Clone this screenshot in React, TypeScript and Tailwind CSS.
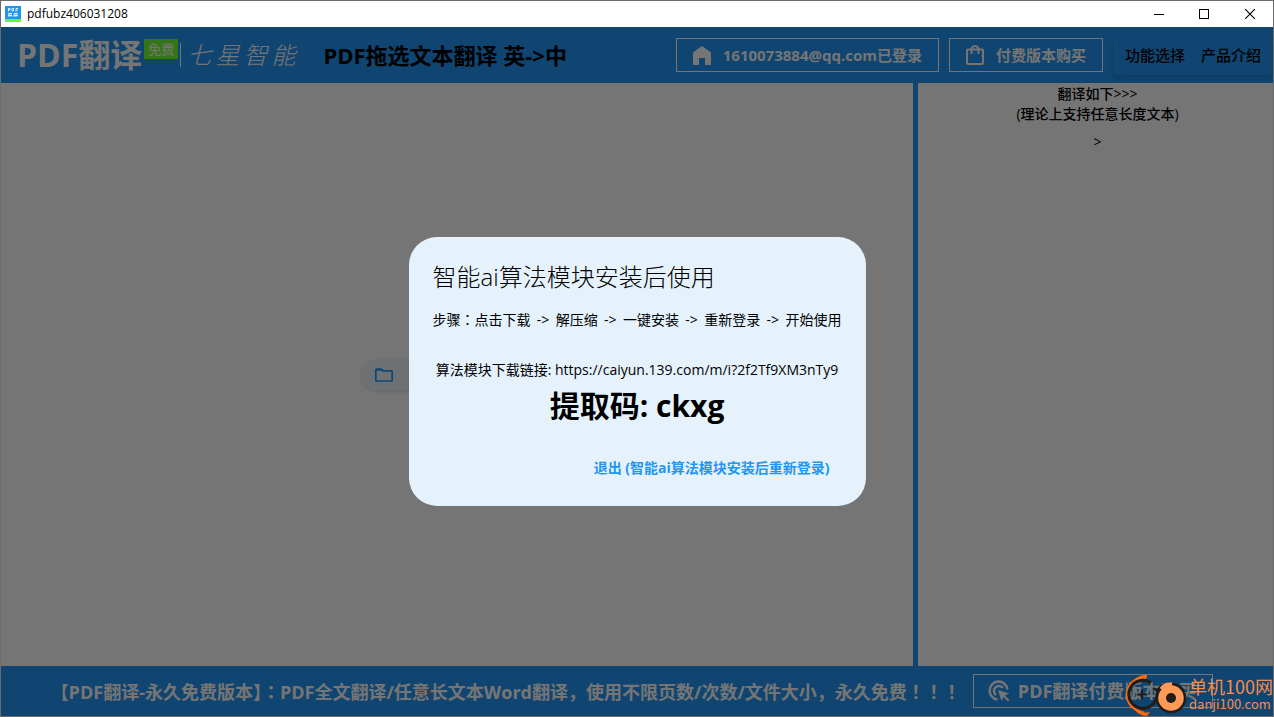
import type { ReactNode } from "react";

function AppIcon() {
  return (
    <svg width="16" height="16" viewBox="0 0 16 16" aria-hidden="true">
      <rect width="16" height="13" fill="#1e96f0" />
      <rect y="13" width="16" height="3" fill="#66f53a" />
      <path d="M3.500 5.500v-3h1.500v1.500h-1.500M7 2.500h1.500v2.500h-1.500zM11 5.500v-3h2M11 4h1.500" stroke="#fff" strokeOpacity=".85" fill="none" />
      <path d="M3 7.500h4M3 9.500h4M4 7v4M6 7v4M9 7.500h4M9 9.500h4M11 7v4M9 8v3" stroke="#fff" strokeOpacity=".8" fill="none" />
    </svg>
  );
}

function WindowControls() {
  return (
    <div className="flex">
      <button type="button" aria-label="最小化" className="flex h-[26px] w-[45px] items-center justify-center">
        <svg width="10" height="10" viewBox="0 0 10 10" shapeRendering="crispEdges"><path d="M0 5.500h10" stroke="#000" /></svg>
      </button>
      <button type="button" aria-label="最大化" className="flex h-[26px] w-[45px] items-center justify-center">
        <svg width="10" height="10" viewBox="0 0 10 10" shapeRendering="crispEdges"><path d="M.5.5h9v9h-9z" stroke="#000" fill="none" /></svg>
      </button>
      <button type="button" aria-label="关闭" className="flex h-[26px] w-[47px] items-center justify-center">
        <svg width="10" height="10" viewBox="0 0 10 10"><path d="M0 0l10 10M10 0L0 10" stroke="#000" strokeWidth="1.100" /></svg>
      </button>
    </div>
  );
}

function HomeIcon() {
  return (
    <svg width="18" height="19" viewBox="0 0 18 19" aria-hidden="true">
      <path d="M0 6.500L9 0l9 6.500V19h-6v-7H6v7H0z" fill="currentColor" />
    </svg>
  );
}

function BagIcon() {
  return (
    <svg width="18" height="20" viewBox="0 0 18 20" fill="none" stroke="currentColor" strokeWidth="2" aria-hidden="true">
      <rect x="1" y="4.500" width="16" height="14.500" rx="1" />
      <path d="M5.500 9V4.500a3.500 3.500 0 0 1 7 0V9" />
    </svg>
  );
}

function ClickIcon() {
  return (
    <svg width="22" height="22" viewBox="0 0 22 22" aria-hidden="true">
      <path d="M9.500 19.500a9 9 0 1 1 10-10" fill="none" stroke="currentColor" strokeWidth="2.400" />
      <path d="M8 15a5 5 0 1 1 7-7" fill="none" stroke="currentColor" strokeWidth="2.400" />
      <path d="M10 10l11 3.500-4.200 2L21.500 20 20 21.500l-4.500-4.500-2 4z" fill="currentColor" />
    </svg>
  );
}

function FolderIcon() {
  return (
    <svg width="18" height="14" viewBox="0 0 18 14" fill="none" stroke="currentColor" strokeWidth="1.700" aria-hidden="true">
      <path d="M1.800 1h4.600l1.600 1.800h8.200a1 1 0 0 1 1 1v8.200a1 1 0 0 1-1 1H1.800a1 1 0 0 1-1-1V2a1 1 0 0 1 1-1z" />
      <path d="M1 2h6.500" />
    </svg>
  );
}

function OutlineButton({ icon, children, large }: { icon: ReactNode; children: ReactNode; large?: boolean }) {
  return (
    <button
      type="button"
      className={
        "flex h-[34px] shrink-0 items-center border border-white font-bold whitespace-nowrap text-white " +
        (large ? "gap-2 pr-4 pl-3.5 text-[18px]" : "gap-3 px-4 text-[15px]")
      }
    >
      {icon}
      {children}
    </button>
  );
}

function SiteBadge() {
  return (
    <div className="pointer-events-none absolute right-0 bottom-0 flex items-center text-[#f58d50]">
      <svg width="65" height="44" viewBox="0 0 65 44" aria-hidden="true">
        <path d="M23 4.500A19.500 19.500 0 0 0 3 22Q3 36 20 41" fill="none" stroke="#ff6a0a" strokeWidth="2.500" />
        <path d="M10 9Q16 2 23 3l-1 4Q15 6 10 9zM9 36q8 6 17 4l-3 4q-8 0-14-8z" fill="#ff6a0a" />
        <path d="M27 11A14 14 0 1 0 29 32Q33 28 33 23Q34 14 43 12" fill="none" stroke="#211b1a" strokeWidth="3" />
        <path d="M29 16l6 4" stroke="#211b1a" strokeWidth="2.500" />
        <path d="M13 22.500h10M18 17.500v10" stroke="#211b1a" strokeWidth="2" />
        <circle cx="47" cy="26" r="14" fill="#ff9a57" stroke="#211b1a" strokeWidth="2.500" />
        <path d="M37 17Q41 11 48 12.500" stroke="#ff9a57" strokeWidth="3.500" fill="none" />
        <circle cx="47" cy="26" r="5" fill="#211b1a" />
      </svg>
      <div className="font-['Noto_Sans_CJK_SC',sans-serif]">
        <div className="text-[18px] leading-5">单机100网</div>
        <div className="text-[13px] leading-4">danji100.com</div>
      </div>
    </div>
  );
}

function InstallDialog() {
  return (
    <div className="absolute inset-0 flex items-center justify-center bg-black/54">
      <section
        role="dialog"
        aria-modal="true"
        aria-labelledby="install-title"
        className="flex min-w-[457px] flex-col rounded-[28px] bg-[#e5f2fc] p-6 text-black"
      >
        <h2 id="install-title" className="text-[24px] leading-8 font-light">智能ai算法模块安装后使用</h2>
        <p className="mt-[15px] flex justify-between font-['Open_Sans','Noto_Sans_CJK_TC',sans-serif] text-[14px] leading-6">
          <span>步骤：点击下载</span>
          <span>-&gt;</span>
          <span>解压缩</span>
          <span>-&gt;</span>
          <span>一键安装</span>
          <span>-&gt;</span>
          <span>重新登录</span>
          <span>-&gt;</span>
          <span>开始使用</span>
        </p>
        <div className="mt-7 text-center whitespace-nowrap">
          <p className="text-[14px] leading-5">算法模块下载链接: https://caiyun.139.com/m/i?2f2Tf9XM3nTy9</p>
          <p className="mt-1 text-[30px] leading-11 font-bold">提取码: ckxg</p>
        </div>
        <button type="button" className="mt-[26px] self-end px-3 py-1 text-[14px] leading-5 font-bold text-[#2196f3]">
          退出 (智能ai算法模块安装后重新登录)
        </button>
      </section>
    </div>
  );
}

export default function App() {
  return (
    <div className="relative flex min-h-screen flex-col border border-[#6b6b6b] bg-white font-['Open_Sans','Noto_Sans_CJK_SC',sans-serif] text-black">
      <div className="flex h-[26px] shrink-0 items-center justify-between pl-1">
        <div className="flex items-center gap-1.5">
          <AppIcon />
          <span className="text-[12px] leading-4">pdfubz406031208</span>
        </div>
        <WindowControls />
      </div>

      <div className="relative flex grow flex-col">
        <header className="flex h-14 shrink-0 items-center bg-[#2196f3] whitespace-nowrap">
          <div className="flex items-center pl-4 text-white">
            <span className="text-[32px] leading-10 font-bold">PDF翻译</span>
            <span className="mb-3 ml-0.5 bg-[#76ff33] px-1 text-[13px] leading-5">免费</span>
            <span className="ml-0.5 h-6 w-px bg-white" />
            <span className="ml-1.5 flex gap-1 text-[24px] leading-8 font-light italic">
              <span>七</span>
              <span>星</span>
              <span>智</span>
              <span>能</span>
            </span>
          </div>
          <h1 className="ml-7 text-[22px] leading-8 font-bold">PDF拖选文本翻译 英-&gt;中</h1>
          <div className="ml-auto flex items-center gap-2.5">
            <OutlineButton icon={<HomeIcon />}>1610073884@qq.com已登录</OutlineButton>
            <OutlineButton icon={<BagIcon />}>付费版本购买</OutlineButton>
            <nav className="flex h-10 items-center gap-4 rounded bg-[#2196f3] px-3 text-[15px] font-medium shadow-md">
              <button type="button">功能选择</button>
              <button type="button">产品介绍</button>
            </nav>
          </div>
        </header>

        <main className="flex grow">
          <div className="flex flex-[72] items-center justify-center">
            <button
              type="button"
              aria-label="打开文件"
              className="flex h-8 w-48 items-center rounded-full bg-[#eef6fd] px-3.5 text-[#2196f3] shadow-sm"
            >
              <FolderIcon />
            </button>
          </div>
          <div className="w-[5px] shrink-0 bg-[#2196f3]" />
          <div className="flex-[28]">
            <div className="pt-px pl-1 text-center text-[14px] leading-5 font-medium">
              <p>翻译如下&gt;&gt;&gt;</p>
              <p>(理论上支持任意长度文本)</p>
              <p className="mt-2 font-normal">&gt;</p>
            </div>
          </div>
        </main>

        <footer className="flex h-[50px] shrink-0 items-center justify-center gap-3 bg-[#2196f3] pr-2.5 whitespace-nowrap text-white">
          <p className="text-[18px] leading-6 font-bold">
            【PDF翻译-永久免费版本】
            <span className="font-['Noto_Sans_CJK_TC',sans-serif]">：</span>
            PDF全文翻译/任意长文本Word翻译，使用不限页数/次数/文件大小，永久免费
            <span className="font-['Noto_Sans_CJK_TC',sans-serif]">！！！</span>
          </p>
          <OutlineButton large icon={<ClickIcon />}>PDF翻译付费版本购买</OutlineButton>
        </footer>

        <InstallDialog />
      </div>
      <SiteBadge />
    </div>
  );
}
